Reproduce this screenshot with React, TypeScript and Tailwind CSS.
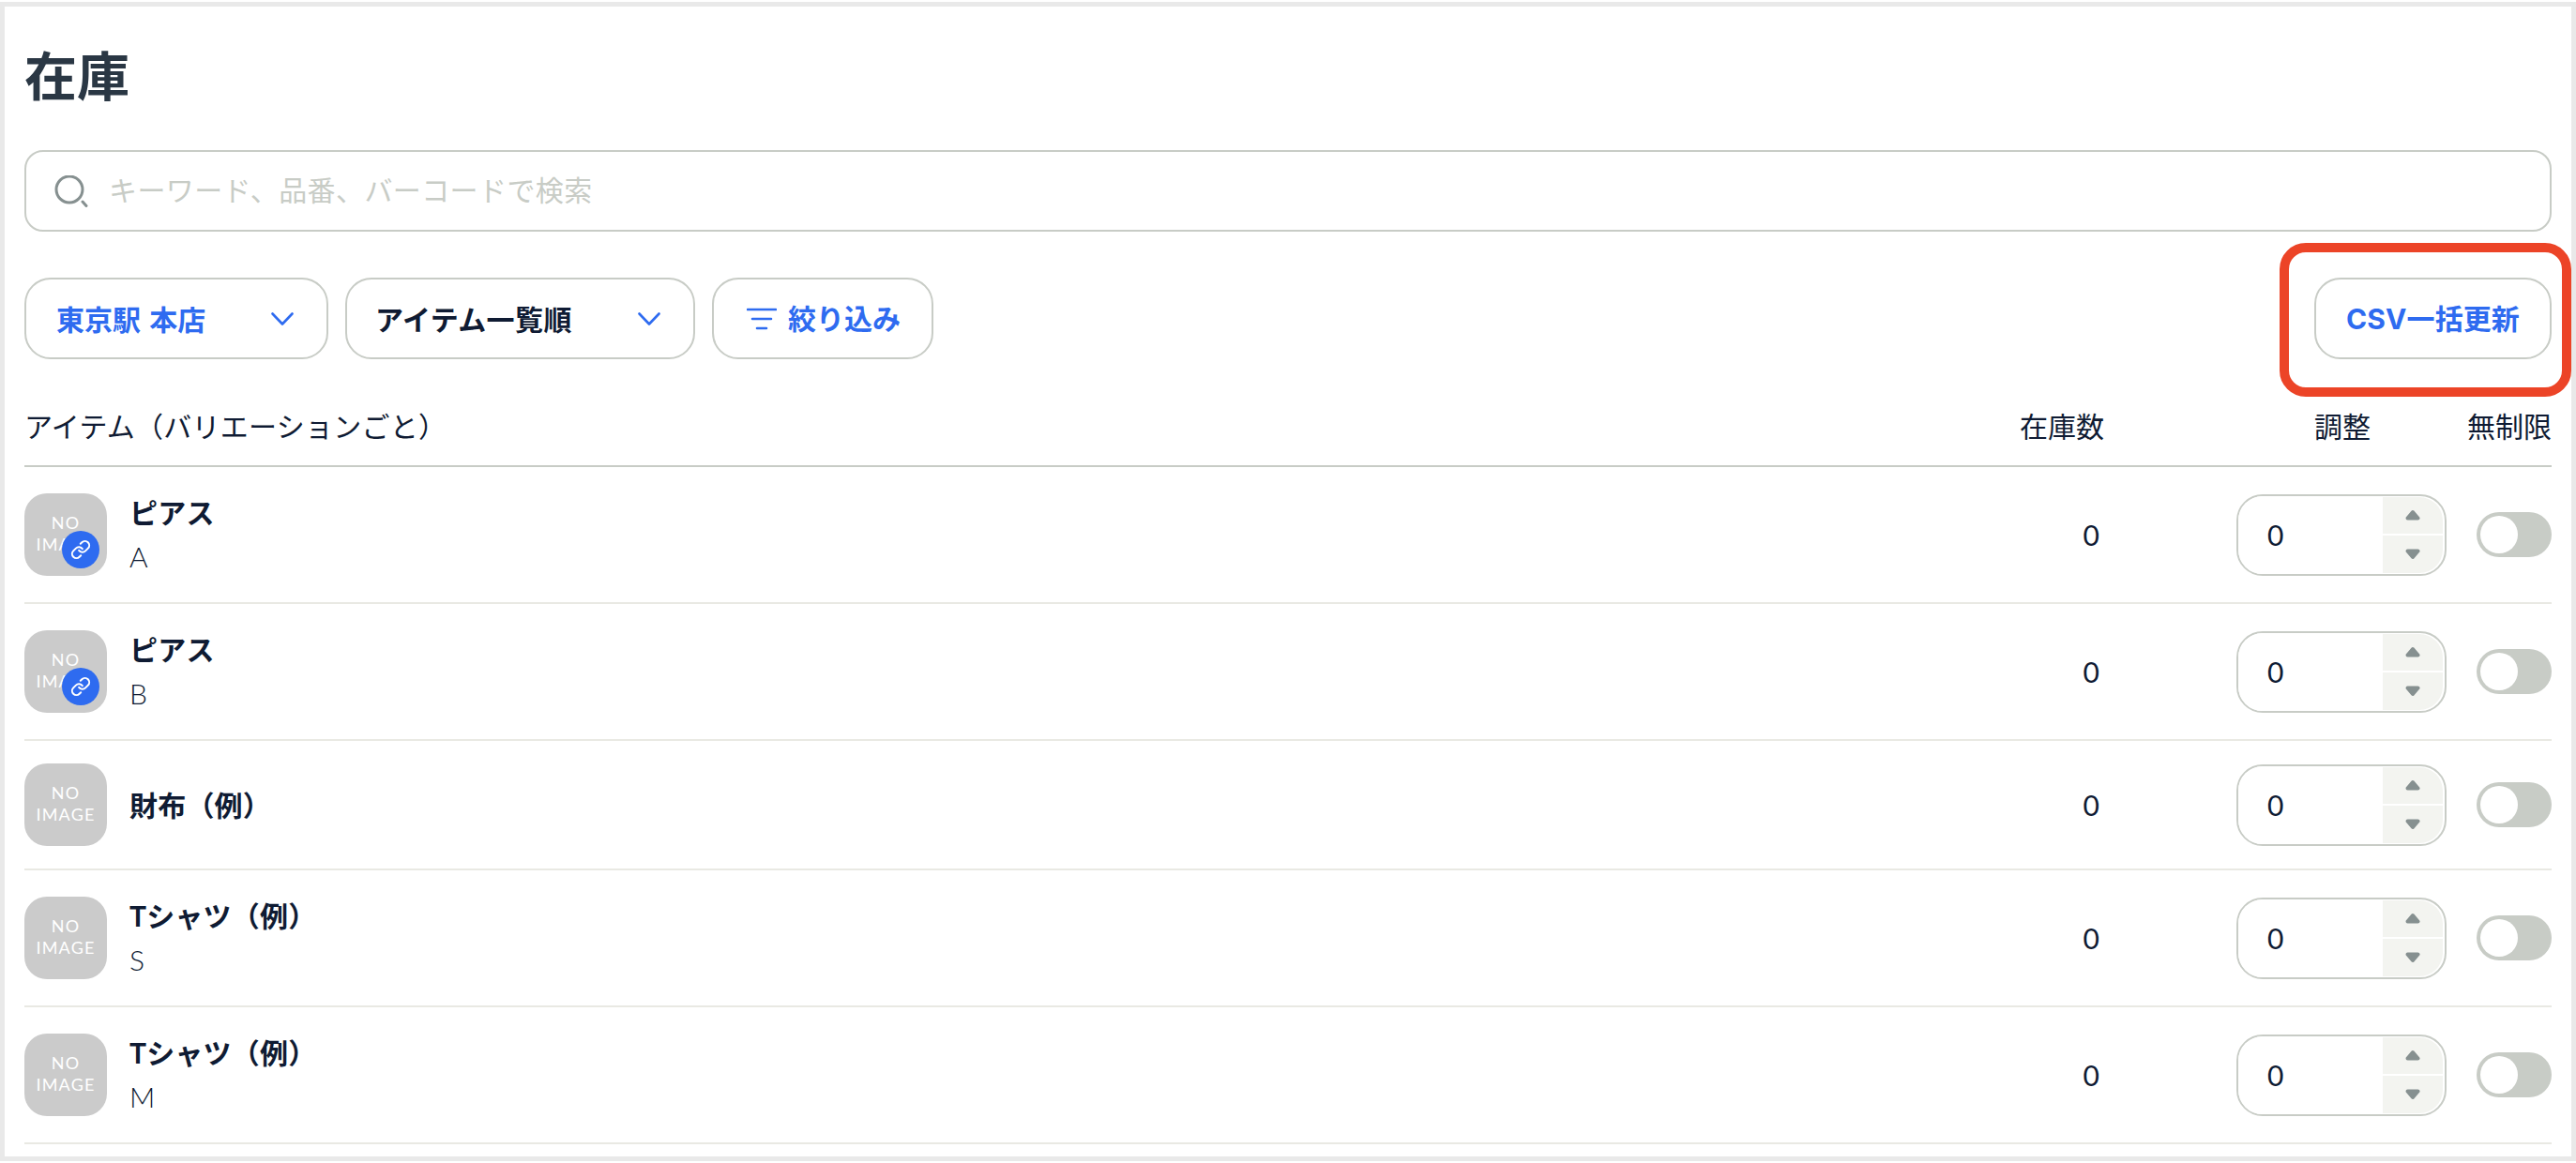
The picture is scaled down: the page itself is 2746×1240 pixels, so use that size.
import { Link } from "lucide-react";

const rows = [
  { name: "ピアス", sub: "A", linked: true },
  { name: "ピアス", sub: "B", linked: true },
  { name: "財布（例）", sub: "", linked: false },
  { name: "Tシャツ（例）", sub: "S", linked: false },
  { name: "Tシャツ（例）", sub: "M", linked: false },
];

function Chevron() {
  return (
    <svg width="24" height="14" viewBox="0 0 24 14" fill="none" className="shrink-0">
      <path d="M1.5 1.5 L12 12.5 L22.5 1.5" stroke="#2e6bf0" strokeWidth="2.6" strokeLinecap="round" strokeLinejoin="round" />
    </svg>
  );
}

function Thumb({ linked }: { linked: boolean }) {
  return (
    <div className="relative flex h-[88px] w-[88px] shrink-0 flex-col items-center justify-center rounded-[24px] bg-[#cbcbcb] pb-[2px] text-center text-[18px] leading-[23px] font-normal tracking-[1.2px] text-white">
      <span>NO</span>
      <span>IMAGE</span>
      {linked && (
        <div className="absolute top-[40px] left-[40px] flex h-[40px] w-[40px] items-center justify-center rounded-full bg-[#2e6bf0]">
          <Link size={22} color="#ffffff" strokeWidth={2.2} />
        </div>
      )}
    </div>
  );
}

function Stepper() {
  return (
    <div className="ml-[146px] flex h-[87px] w-[224px] overflow-hidden rounded-[28px] border-2 border-[#c8ccc6] bg-white">
      <input readOnly value="0" className="w-0 flex-1 bg-white pl-[31px] text-[30px] font-normal text-[#0f1b33] outline-none" />
      <div className="my-px mr-[2px] flex w-[64px] flex-col gap-[2px] overflow-hidden rounded-r-[25px]">
        <div className="flex flex-1 items-center justify-center bg-[#f3f4f0]">
          <svg width="16" height="12" viewBox="0 0 16 12"><path d="M8 3 L13.5 9.5 H2.5 Z" fill="#869090" stroke="#869090" strokeWidth="4" strokeLinejoin="round" /></svg>
        </div>
        <div className="flex flex-1 items-center justify-center bg-[#f3f4f0]">
          <svg width="16" height="12" viewBox="0 0 16 12"><path d="M8 9 L13.5 2.5 H2.5 Z" fill="#869090" stroke="#869090" strokeWidth="4" strokeLinejoin="round" /></svg>
        </div>
      </div>
    </div>
  );
}

function Toggle() {
  return (
    <div className="ml-[32px] flex h-[48px] w-[80px] items-center rounded-full bg-[#c8ccc6] pl-[4px]">
      <div className="h-[40px] w-[40px] rounded-full bg-white" />
    </div>
  );
}

export default function App() {
  return (
    <div className="h-[1240px] w-[2746px] overflow-hidden bg-white pt-[2px] font-['Lato','Noto_Sans_CJK_JP',sans-serif] text-[#0f1b33]">
      <div className="relative h-[1236px] border-[5px] border-[#e9e9e9] bg-white px-[21px]">
        <h1 className="pt-[38px] text-[56px] leading-[72px] font-bold text-[#2a3744]">在庫</h1>

        <div className="mt-[43px] flex h-[87px] items-center rounded-[20px] border-2 border-[#c8ccc6] pl-[30px]">
          <svg width="36" height="34" viewBox="0 0 36 34" fill="none" className="shrink-0">
            <circle cx="16" cy="15" r="14" stroke="#869090" strokeWidth="3" />
            <path d="M30 28 L34 32.5" stroke="#869090" strokeWidth="3" strokeLinecap="round" />
          </svg>
          <input
            readOnly
            placeholder="キーワード、品番、バーコードで検索"
            className="mb-[2px] ml-[22px] flex-1 bg-transparent text-[30px] tracking-[0.4px] outline-none placeholder:text-[#c8ccc6]"
          />
        </div>

        <div className="mt-[49px] flex items-center">
          <button className="flex h-[87px] w-[324px] items-center justify-between rounded-[28px] border-2 border-[#c8ccc6] pr-[35px] pl-[32px] text-[30px] font-bold text-[#2e6bf0]">
            <span className="pt-[2px] [word-spacing:2px]">東京駅 本店</span>
            <Chevron />
          </button>
          <button className="ml-[18px] flex h-[87px] w-[373px] items-center justify-between rounded-[28px] border-2 border-[#c8ccc6] pr-[35px] pl-[30px] text-[30px] font-bold text-[#0f1b33]">
            <span className="pt-[2px] tracking-[0.4px]">アイテム一覧順</span>
            <Chevron />
          </button>
          <button className="ml-[18px] flex h-[87px] w-[236px] items-center rounded-[28px] border-2 border-[#c8ccc6] pl-[35px] text-[30px] font-bold text-[#2e6bf0]">
            <svg width="32" height="24" viewBox="0 0 32 24" fill="none" className="shrink-0">
              <path d="M1 2 H31 M6 12 H26 M11 22 H21" stroke="#2e6bf0" strokeWidth="2.6" strokeLinecap="round" />
            </svg>
            <span className="ml-[12px]">絞り込み</span>
          </button>
          <button className="ml-auto flex h-[87px] w-[253px] items-center justify-center rounded-[28px] border-2 border-[#c8ccc6] text-[30px] font-bold whitespace-nowrap text-[#2e6bf0]">
            <span className="pt-[2px] font-['Inter','Noto_Sans_CJK_JP',sans-serif] tracking-[0.1px]">CSV一括更新</span>
          </button>
        </div>

        <div className="mt-[48px] flex h-[67px] border-b-2 border-[#c8ccc6] text-[30px] leading-[46px]">
          <span className="flex-1 tracking-[0.25px]">アイテム（バリエーションごと）</span>
          <span className="w-[90px]">在庫数</span>
          <span className="ml-[224px] w-[60px]">調整</span>
          <span className="ml-[103px] w-[90px]">無制限</span>
        </div>

        {rows.map((r, i) => (
          <div key={i} className="flex items-center border-b-2 border-[#e9e9e3] py-[24px] text-[30px] leading-[48px]">
            <div className="flex flex-1 items-center">
              <Thumb linked={r.linked} />
              <div className="ml-[24px] tracking-[0.2px]">
                <div className="font-bold">{r.name}</div>
                {r.sub && <div className="pb-[2px] leading-[46px] font-light">{r.sub}</div>}
              </div>
            </div>
            <span className="w-[60px] text-right">0</span>
            <Stepper />
            <Toggle />
          </div>
        ))}

        <div className="absolute top-[252px] right-0 h-[164px] w-[311px] rounded-[28px] border-[10px] border-[#ec4427]" />
      </div>
    </div>
  );
}
